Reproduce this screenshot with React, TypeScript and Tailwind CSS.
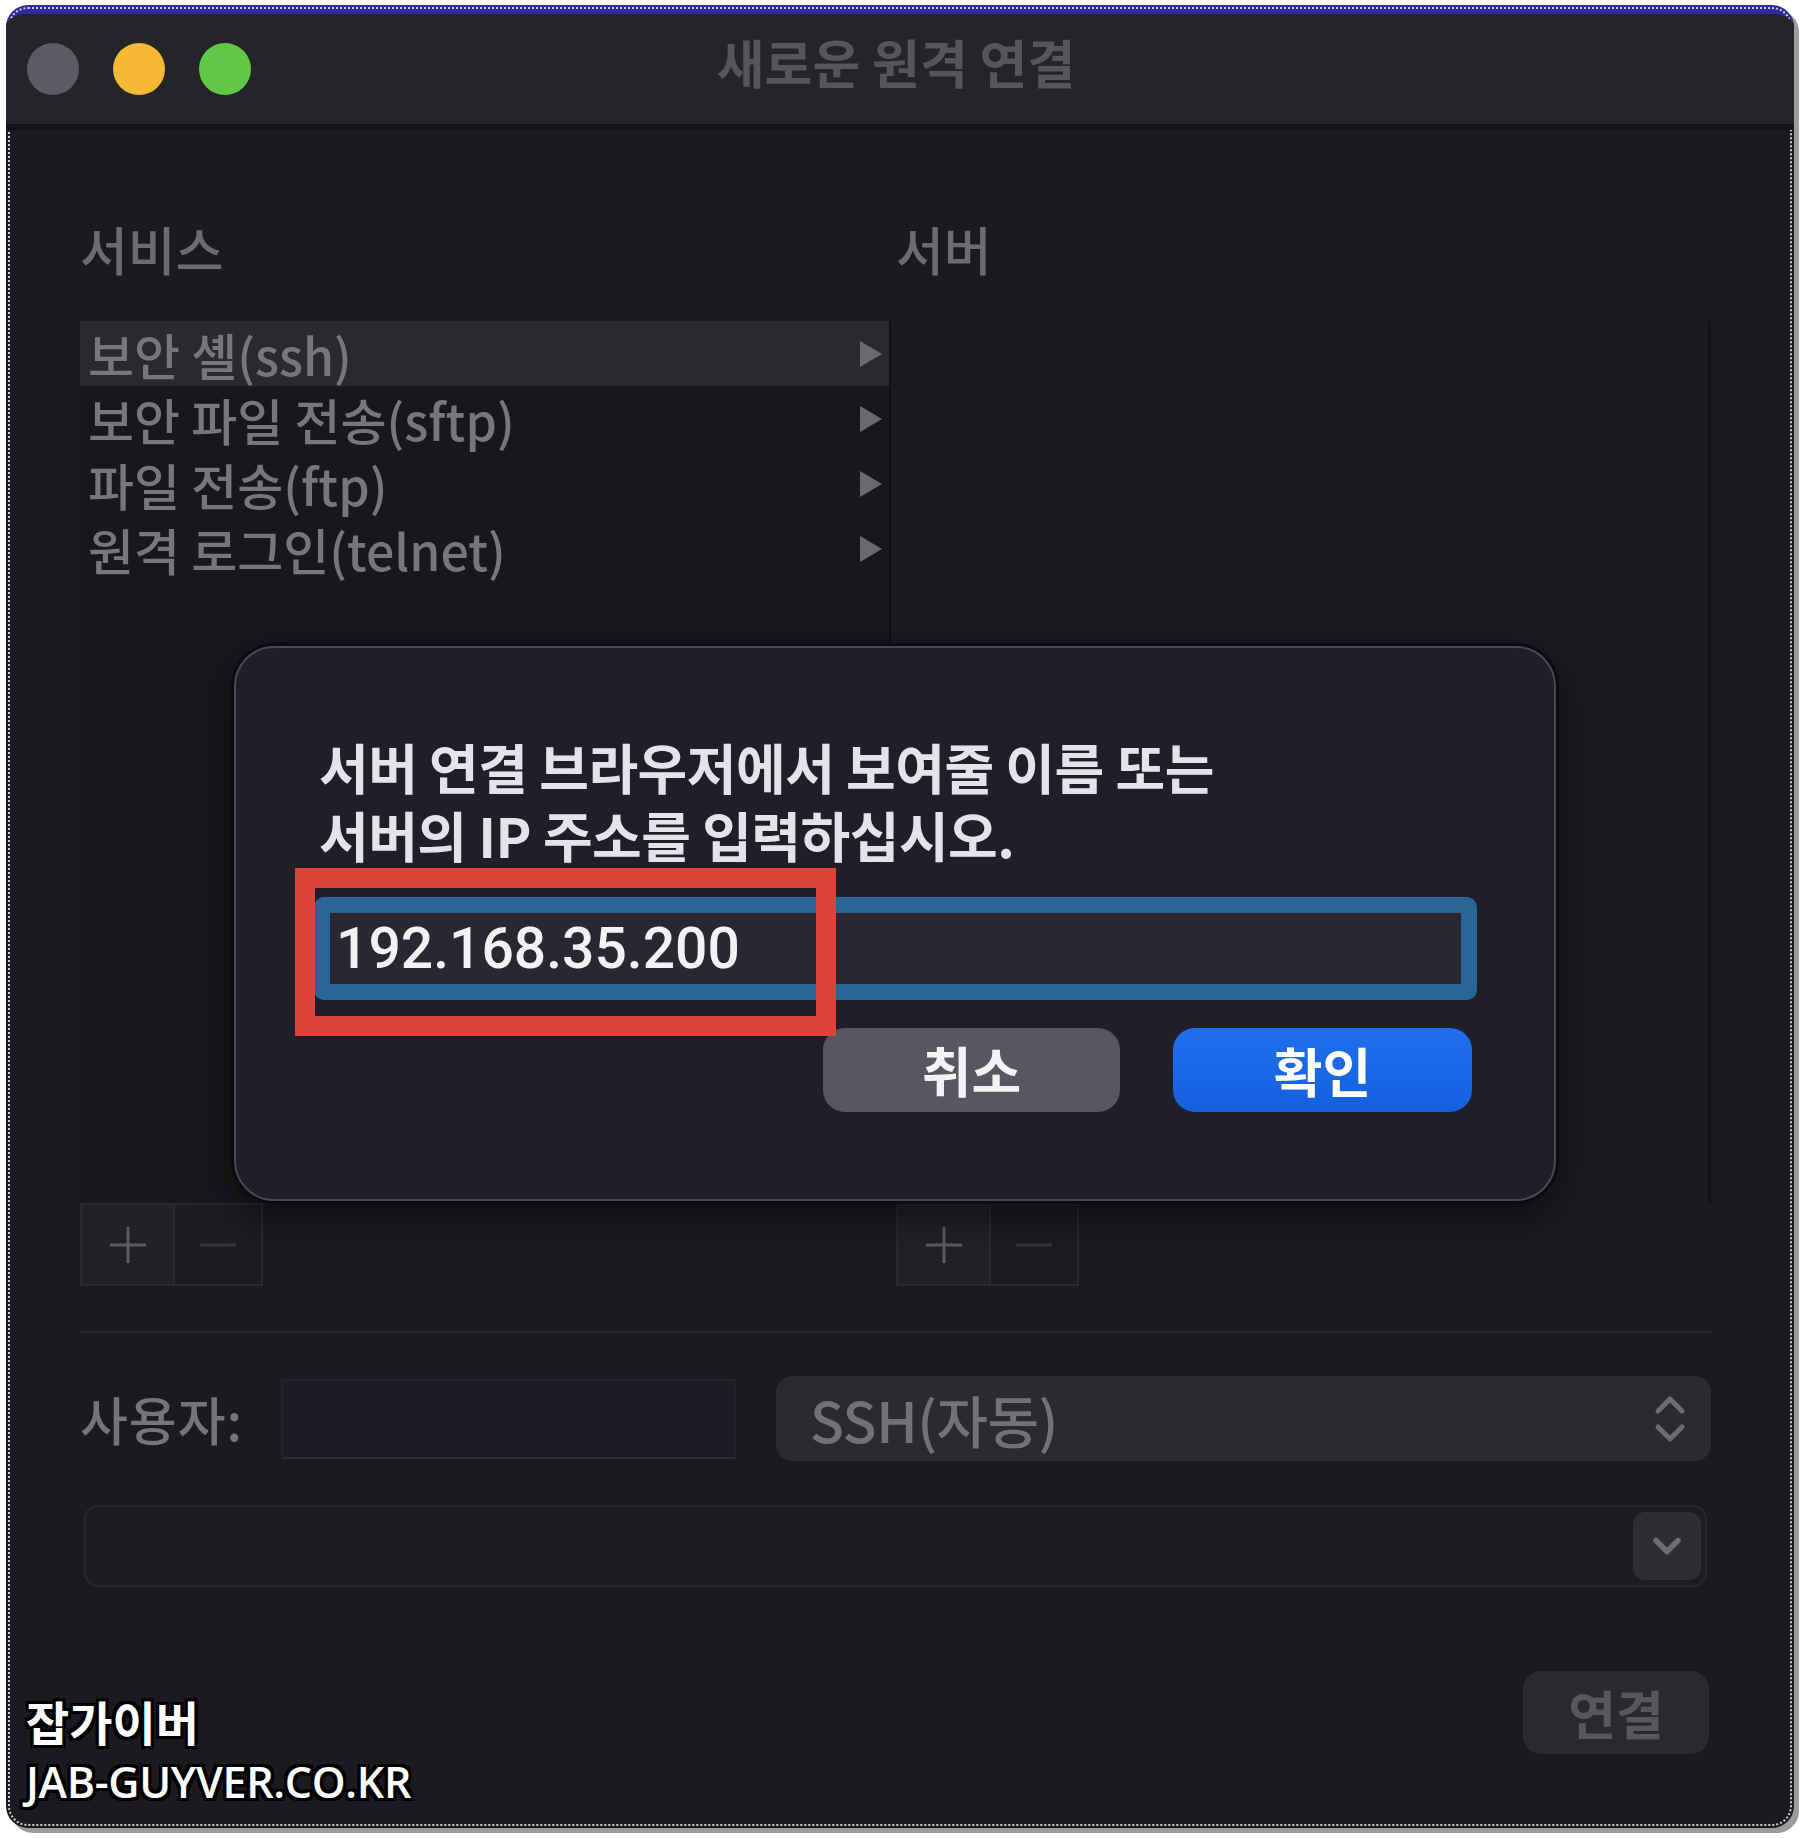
import { ChevronDown } from "lucide-react"

const kr = "font-['Noto_Sans_CJK_KR',sans-serif]"

function Triangle() {
  return (
    <svg width="26" height="30" viewBox="0 0 26 30" className="shrink-0">
      <path d="M2 2 L24 15 L2 28 Z" fill="#6a696f" />
    </svg>
  )
}

function UpDown() {
  return (
    <svg width="34" height="50" viewBox="0 0 34 50" fill="none" stroke="#6d6c72" strokeWidth="5" strokeLinecap="round" strokeLinejoin="round">
      <path d="M5 17 L17 5 L29 17" />
      <path d="M5 33 L17 45 L29 33" />
    </svg>
  )
}

function PlusMinus() {
  return (
    <div className="flex h-[83px] w-[183px] border-2 border-[#2a292f]">
      <div className="flex w-[93px] items-center justify-center border-r-2 border-[#2a292f] bg-[#222127]">
        <svg width="40" height="40" viewBox="0 0 40 40" stroke="#5c5b61" strokeWidth="3">
          <path d="M20 2 V38 M2 20 H38" />
        </svg>
      </div>
      <div className="flex flex-1 items-center justify-center bg-[#1d1c21]">
        <svg width="36" height="6" viewBox="0 0 36 6" stroke="#36353b" strokeWidth="3">
          <path d="M0 3 H36" />
        </svg>
      </div>
    </div>
  )
}

export default function App() {
  const services = ["보안 셸(ssh)", "보안 파일 전송(sftp)", "파일 전송(ftp)", "원격 로그인(telnet)"]

  return (
    <div className="h-[1838px] w-[1800px] bg-white pl-[6px] pt-[5px]">
      <div className="relative h-[1823px] w-[1788px] overflow-hidden rounded-[22px] border-t-[9px] border-[#2d2a9c] bg-[#1b1a1f] shadow-[5px_5px_0_#9c9c9c] outline-2 outline-dotted outline-[#cfcfcf] -outline-offset-[4px]">
        {/* title bar */}
        <div className="relative flex h-[116px] items-center border-b-[6px] border-[#131216] bg-[#252429] pl-[21px]">
          <div className="flex gap-[34px]">
            <div className="h-[52px] w-[52px] rounded-full bg-[#5c5a63]" />
            <div className="h-[52px] w-[52px] rounded-full bg-[#f5b934]" />
            <div className="h-[52px] w-[52px] rounded-full bg-[#62c646]" />
          </div>
          <div className={`absolute inset-x-0 top-[22px] pr-[8px] text-center text-[52px] font-bold leading-none text-[#56555b] ${kr}`}>새로운 원격 연결</div>
        </div>

        {/* main */}
        <div className={`pl-[74px] pr-[83px] pt-[93px] ${kr}`}>
          <div className="flex gap-[5px]">
            <div className="w-[811px]">
              <div className="text-[52px] font-medium leading-none text-[#6c6b71]">서비스</div>
              <div className="mt-[46px] h-[882px] border-r-2 border-[#111014] bg-[#18171b]">
                {services.map((s, i) => (
                  <div key={s} className={`flex h-[65px] items-center justify-between pl-[8px] pr-[5px] ${i === 0 ? "bg-[#2a292e]" : ""}`}>
                    <span className="text-[50px] font-medium leading-none text-[#77767c]">{s}</span>
                    <Triangle />
                  </div>
                ))}
              </div>
              <PlusMinus />
            </div>
            <div className="w-[815px]">
              <div className="text-[52px] font-medium leading-none text-[#6c6b71]">서버</div>
              <div className="mt-[46px] h-[882px] border-r-[3px] border-[#121115] bg-[#1b1a1f]" />
              <PlusMinus />
            </div>
          </div>

          <div className="mt-[45px] h-[2px] bg-[#29282d]" />

          <div className="mt-[43px] flex h-[85px] items-center">
            <div className="w-[160px] whitespace-nowrap text-[52px] font-medium leading-none tracking-[1px] text-[#75747a]">사용자:</div>
            <div className="ml-[41px] h-[80px] w-[455px] border-2 border-[#232228] border-b-[#2e2d33] bg-[#1d1b23]" />
            <div className="ml-[40px] flex h-[85px] flex-1 items-center justify-between rounded-[16px] bg-[#2b2a30] pl-[34px] pr-[24px]">
              <span className="text-[56px] font-medium leading-none tracking-[-0.5px] text-[#727177]">SSH(자동)</span>
              <UpDown />
            </div>
          </div>

          <div className="mx-[4px] mt-[44px] flex h-[82px] items-center justify-end rounded-[14px] border-2 border-[#28272d] bg-[#1d1c22] pr-[4px]">
            <div className="flex h-[68px] w-[68px] items-center justify-center rounded-[12px] bg-[#2e2d33]">
              <ChevronDown size={44} strokeWidth={3} color="#6d6c72" />
            </div>
          </div>

          <div className="mt-[84px] flex justify-end pr-[2px]">
            <div className="flex h-[83px] w-[186px] items-center justify-center rounded-[18px] bg-[#2a292f] text-[52px] font-bold leading-none text-[#58575d]">연결</div>
          </div>
        </div>

        {/* dialog */}
        <div className={`absolute left-[228px] top-[632px] w-[1322px] rounded-[40px] border-2 border-[#4a4853] bg-[#201e29] pb-[87px] pl-[83px] pr-[82px] pt-[85px] shadow-[0_0_0_3px_#0c0b0f,0_14px_40px_rgba(0,0,0,0.55)] ${kr}`}>
          <div className="whitespace-nowrap text-[54px] font-bold leading-[68px] tracking-[-0.5px] text-[#e4e3e8]">
            <div>서버 연결 브라우저에서 보여줄 이름 또는</div>
            <div>서버의 IP 주소를 입력하십시오.</div>
          </div>
          <div className="-ml-[5px] mr-[-5px] mt-[28px] h-[103px] rounded-[10px] border-[16px] border-[#2a6597] bg-[#2a2733]">
            <div className="flex h-full items-center pl-[6px] font-['Roboto',sans-serif] text-[57px] font-medium leading-none text-[#f2f2f4]">192.168.35.200</div>
          </div>
          <div className="mt-[28px] flex justify-end gap-[53px]">
            <div className="flex h-[84px] w-[297px] items-center justify-center rounded-[22px] bg-[#5a5661] text-[54px] font-bold leading-none text-[#f3f3f5]">취소</div>
            <div className="flex h-[84px] w-[299px] items-center justify-center rounded-[22px] bg-gradient-to-b from-[#1f70ee] to-[#1560dc] text-[53px] font-bold leading-none text-white">확인</div>
          </div>
          {/* annotation */}
          <div className="absolute left-[59px] top-[220px] h-[168px] w-[541px] border-[20px] border-[#dc4437]" />
        </div>

        {/* watermark */}
        <div className="absolute bottom-[20px] left-[20px] font-bold text-white [text-shadow:-3px_-3px_0_#000,3px_-3px_0_#000,-3px_3px_0_#000,3px_3px_0_#000,0_3px_0_#000,0_-3px_0_#000,3px_0_0_#000,-3px_0_0_#000]">
          <div className={`text-[47px] leading-[70px] ${kr}`}>잡가이버</div>
          <div className="font-['Open_Sans',sans-serif] text-[43px] font-semibold leading-[52px] tracking-[-0.3px]">JAB-GUYVER.CO.KR</div>
        </div>
      </div>
    </div>
  )
}
